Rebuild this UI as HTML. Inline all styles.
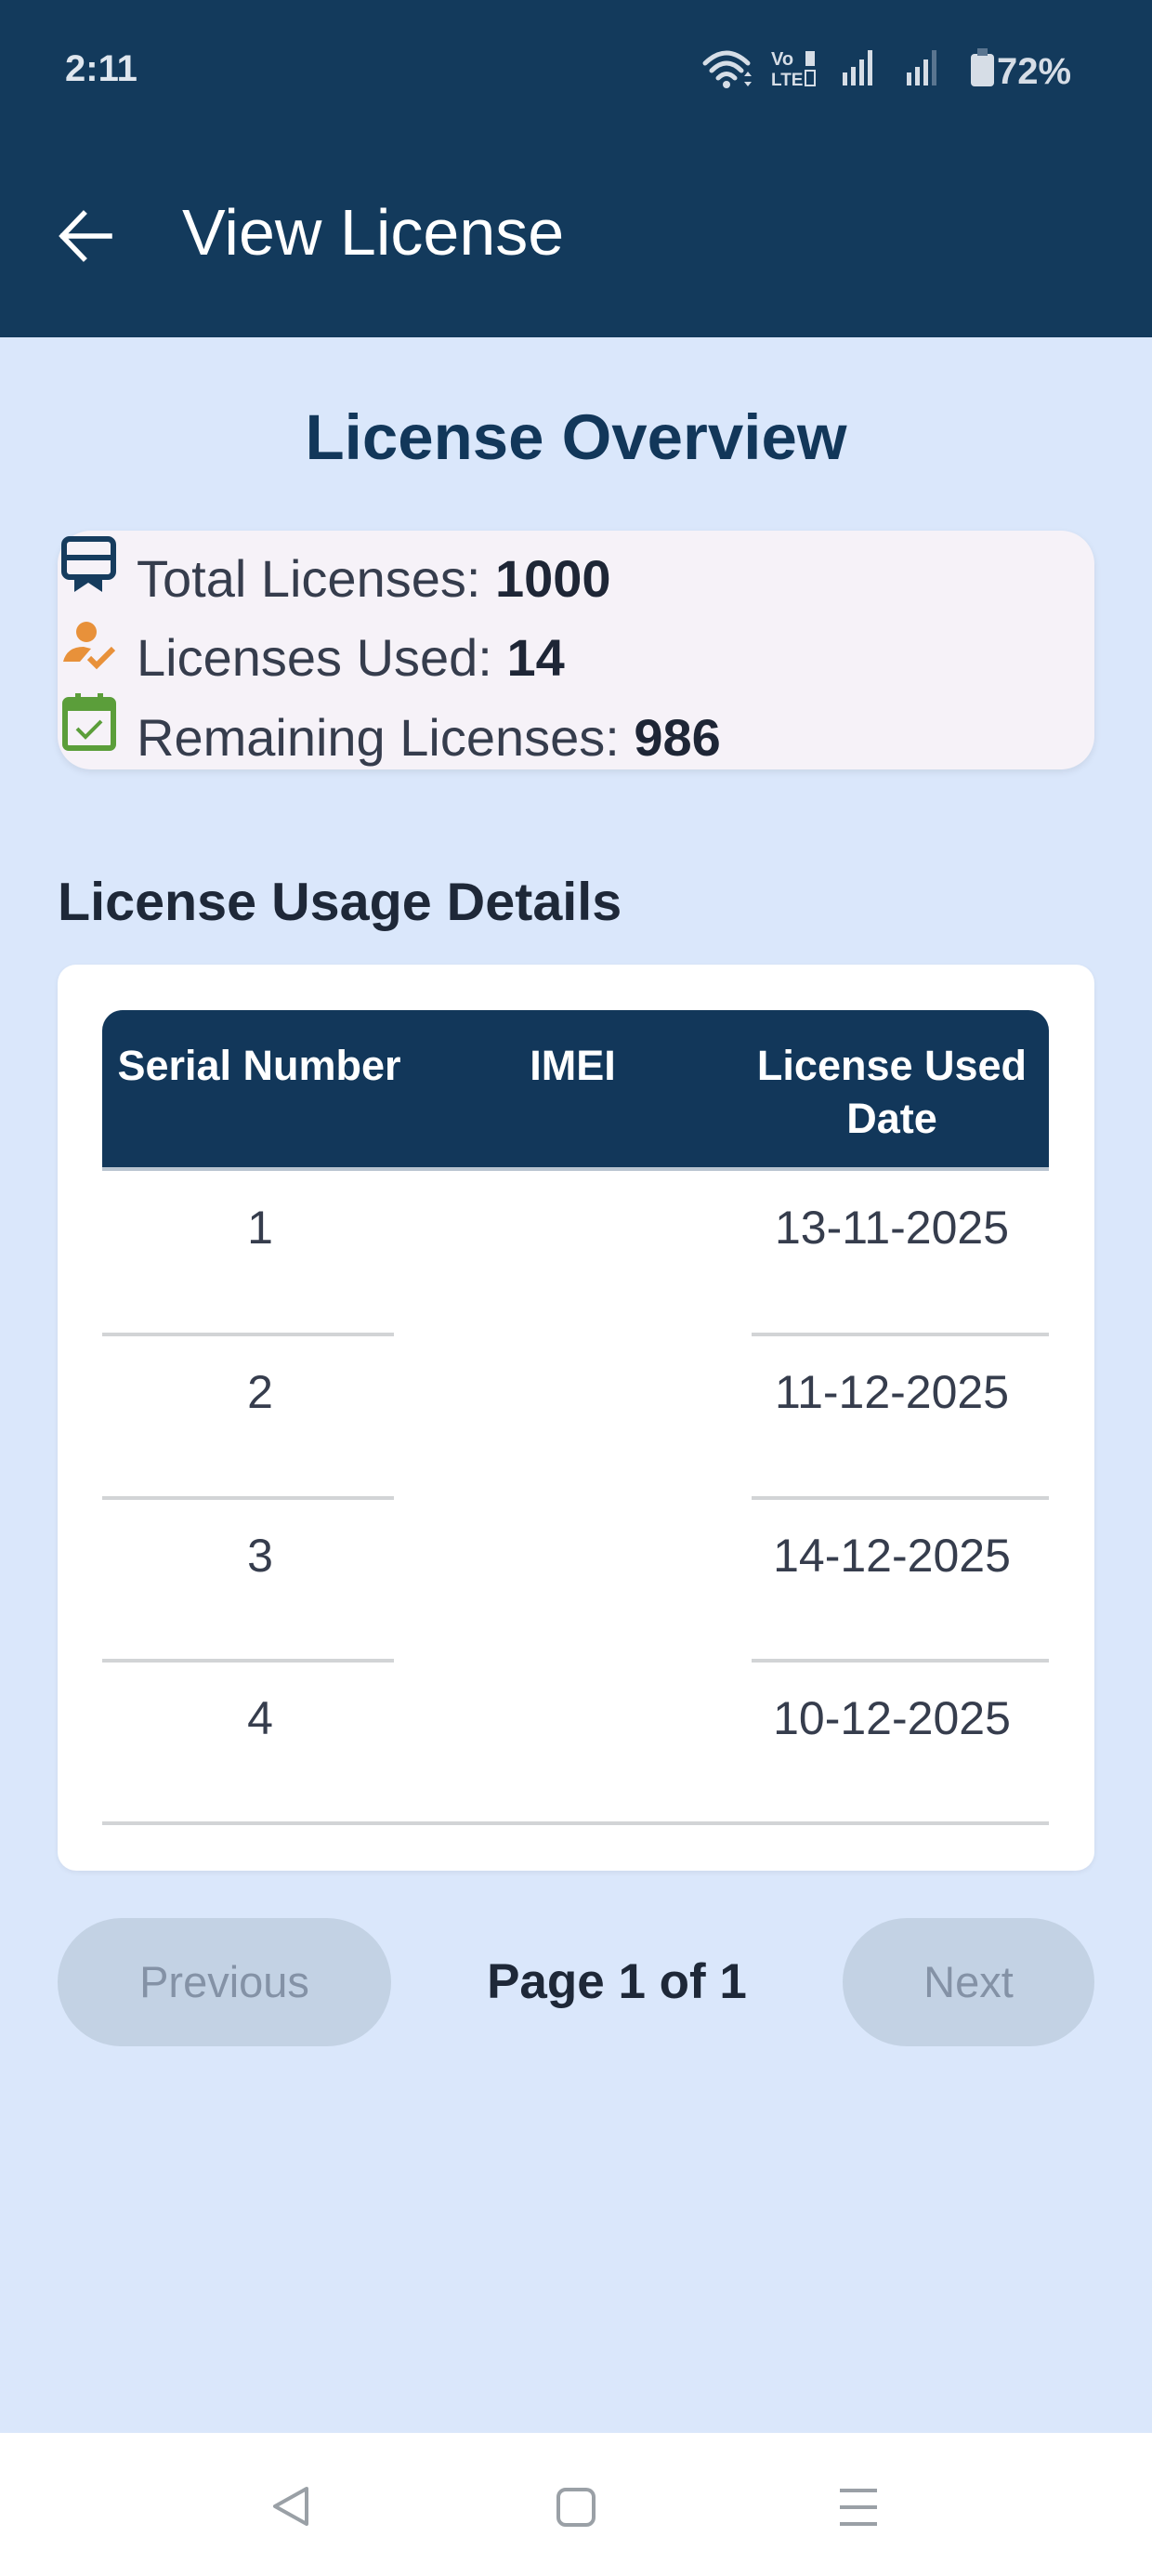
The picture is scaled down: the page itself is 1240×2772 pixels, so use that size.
<!DOCTYPE html>
<html><head><meta charset="utf-8"><style>
*{margin:0;padding:0;box-sizing:border-box}
body{width:1240px;height:2772px;background:#dae7fb;font-family:"Liberation Sans",sans-serif;position:relative;overflow:hidden}
.abs{position:absolute}
.hdr{left:0;top:0;width:1240px;height:363px;background:#133a5c}
.t{white-space:nowrap}
.card{left:62px;top:571px;width:1116px;height:257px;background:#f6f2f8;border-radius:36px;box-shadow:0 3px 8px rgba(0,0,0,.08)}
.ov{left:147px;font-size:56px;color:#363d4d;line-height:60px}
.ov b{color:#1e2636}
.tbl{left:62px;top:1038px;width:1116px;height:975px;background:#fff;border-radius:20px;box-shadow:0 2px 6px rgba(0,0,0,.06)}
.th{left:110px;top:1087px;width:1019px;height:173px;background:#12375a;border-radius:22px 22px 0 0;border-bottom:4px solid #b9c4d0}
.hc{color:#fff;font-weight:bold;font-size:45px;text-align:center;line-height:57px}
.cell{font-size:50px;color:#363d4d;text-align:center;line-height:56px}
.ln{height:4px;background:#d2d4d6}
.btn{background:#c3d2e4;border-radius:70px;color:#8492a6;font-size:47px;text-align:center;line-height:138px;top:2064px;height:138px}
</style></head><body>
<div class="abs hdr"></div>
<div class="abs t" style="left:70px;top:52px;font-size:40px;font-weight:bold;color:#dfe6ee">2:11</div>
<svg class="abs" style="left:755px;top:48px" width="420" height="50" viewBox="0 0 420 50">
<g fill="none" stroke="#d6dde6" stroke-width="5" stroke-linecap="round">
<path d="M4 20 Q27 -2 50 20"/><path d="M11 28 Q27 12 43 28"/><path d="M18 36 Q27 27 36 36"/>
</g>
<circle cx="27" cy="43" r="4" fill="#d6dde6"/>
<path d="M46 34 l4 -5 l4 5z M46 40 l4 5 l4 -5z" fill="#d6dde6"/>
<text x="75" y="22" font-family="Liberation Sans" font-weight="bold" font-size="20" fill="#d6dde6">Vo</text>
<text x="75" y="44" font-family="Liberation Sans" font-weight="bold" font-size="19" fill="#d6dde6">LTE</text>
<rect x="112" y="7" width="10" height="16" fill="#d6dde6"/><rect x="112" y="28" width="10" height="16" fill="none" stroke="#d6dde6" stroke-width="2"/>
<g fill="#d6dde6"><rect x="152" y="30" width="5" height="14"/><rect x="161" y="24" width="5" height="20"/><rect x="170" y="16" width="5" height="28"/><rect x="179" y="6" width="5" height="38"/>
<rect x="221" y="30" width="5" height="14"/><rect x="230" y="24" width="5" height="20"/><rect x="239" y="16" width="5" height="28"/></g>
<rect x="248" y="6" width="5" height="38" fill="#5a7590"/>
<rect x="290" y="10" width="25" height="35" rx="4" fill="#d6dde6"/><rect x="297" y="4" width="11" height="8" fill="#5a7590"/>
<text x="318" y="42" font-family="Liberation Sans" font-weight="bold" font-size="40" fill="#d6dde6">72%</text>
</svg>
<svg class="abs" style="left:62px;top:226px" width="60" height="56" viewBox="0 0 60 56"><path d="M56 28H6 M28 4 L5 28 L28 52" fill="none" stroke="#fff" stroke-width="5.5" stroke-linecap="square"/></svg>
<div class="abs t" style="left:196px;top:210px;font-size:70px;color:#fff">View License</div>

<div class="abs t" style="left:0;width:1240px;text-align:center;top:431px;font-size:69px;font-weight:bold;color:#12375a">License Overview</div>

<div class="abs card"></div>
<svg class="abs" style="left:66px;top:577px" width="60" height="62" viewBox="0 0 60 62"><rect x="3" y="3" width="53" height="41" rx="6" fill="none" stroke="#163c5e" stroke-width="6"/><rect x="6" y="20" width="47" height="6" fill="#163c5e"/><path d="M14 44 V60 L29 50 L44 60 V44z" fill="#163c5e"/></svg>
<div class="abs t ov" style="top:593px">Total Licenses: <b>1000</b></div>
<svg class="abs" style="left:68px;top:668px" width="60" height="56" viewBox="0 0 60 56"><circle cx="25" cy="12" r="11" fill="#e8913a"/><path d="M0 44 Q4 28 22 28 L30 30 L18 44z" fill="#e8913a"/><path d="M28 40 L36 48 L54 30" fill="none" stroke="#e8913a" stroke-width="6"/></svg>
<div class="abs t ov" style="top:678px">Licenses Used: <b>14</b></div>
<svg class="abs" style="left:67px;top:746px" width="58" height="62" viewBox="0 0 58 62"><rect x="14" y="0" width="6" height="10" fill="#5b9e3a"/><rect x="38" y="0" width="6" height="10" fill="#5b9e3a"/><rect x="3" y="7" width="52" height="52" rx="4" fill="none" stroke="#5b9e3a" stroke-width="6"/><rect x="3" y="7" width="52" height="12" fill="#5b9e3a"/><path d="M16 38 L25 47 L42 30" fill="none" stroke="#5b9e3a" stroke-width="4"/></svg>
<div class="abs t ov" style="top:764px">Remaining Licenses: <b>986</b></div>

<div class="abs t" style="left:62px;top:938px;font-size:57.5px;font-weight:bold;color:#1e2838">License Usage Details</div>

<div class="abs tbl"></div>
<div class="abs th"></div>
<div class="abs hc t" style="left:110px;width:338px;top:1118px">Serial Number</div>
<div class="abs hc t" style="left:424px;width:385px;top:1118px">IMEI</div>
<div class="abs hc" style="left:800px;width:320px;top:1118px">License Used<br>Date</div>

<div class="abs cell" style="left:110px;width:340px;top:1293px">1</div>
<div class="abs cell" style="left:800px;width:320px;top:1293px">13-11-2025</div>
<div class="abs ln" style="left:110px;width:314px;top:1434px"></div>
<div class="abs ln" style="left:809px;width:320px;top:1434px"></div>

<div class="abs cell" style="left:110px;width:340px;top:1470px">2</div>
<div class="abs cell" style="left:800px;width:320px;top:1470px">11-12-2025</div>
<div class="abs ln" style="left:110px;width:314px;top:1610px"></div>
<div class="abs ln" style="left:809px;width:320px;top:1610px"></div>

<div class="abs cell" style="left:110px;width:340px;top:1646px">3</div>
<div class="abs cell" style="left:800px;width:320px;top:1646px">14-12-2025</div>
<div class="abs ln" style="left:110px;width:314px;top:1785px"></div>
<div class="abs ln" style="left:809px;width:320px;top:1785px"></div>

<div class="abs cell" style="left:110px;width:340px;top:1821px">4</div>
<div class="abs cell" style="left:800px;width:320px;top:1821px">10-12-2025</div>
<div class="abs ln" style="left:110px;width:1019px;top:1960px"></div>

<div class="abs btn" style="left:62px;width:359px">Previous</div>
<div class="abs t" style="left:421px;width:486px;text-align:center;top:2102px;font-size:53px;font-weight:bold;color:#1e2838">Page 1 of 1</div>
<div class="abs btn" style="left:907px;width:271px">Next</div>

<div class="abs" style="left:0;top:2618px;width:1240px;height:154px;background:#fff"></div>
<svg class="abs" style="left:290px;top:2674px" width="50" height="46" viewBox="0 0 50 46"><path d="M40 4 L6 23 L40 42z" fill="none" stroke="#9aa0a6" stroke-width="4" stroke-linejoin="round"/></svg>
<svg class="abs" style="left:598px;top:2676px" width="44" height="44" viewBox="0 0 44 44"><rect x="3" y="3" width="38" height="38" rx="8" fill="none" stroke="#9aa0a6" stroke-width="4"/></svg>
<svg class="abs" style="left:902px;top:2676px" width="44" height="44" viewBox="0 0 44 44"><path d="M2 4H42 M2 22H42 M2 40H42" stroke="#9aa0a6" stroke-width="4"/></svg>
</body></html>
